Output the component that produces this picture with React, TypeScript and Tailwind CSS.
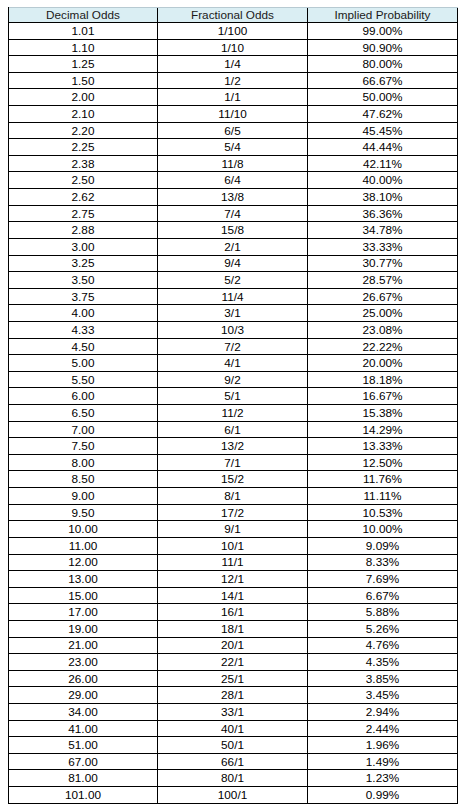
const rows: [string, string, string][] = [
  ["1.01", "1/100", "99.00%"],
  ["1.10", "1/10", "90.90%"],
  ["1.25", "1/4", "80.00%"],
  ["1.50", "1/2", "66.67%"],
  ["2.00", "1/1", "50.00%"],
  ["2.10", "11/10", "47.62%"],
  ["2.20", "6/5", "45.45%"],
  ["2.25", "5/4", "44.44%"],
  ["2.38", "11/8", "42.11%"],
  ["2.50", "6/4", "40.00%"],
  ["2.62", "13/8", "38.10%"],
  ["2.75", "7/4", "36.36%"],
  ["2.88", "15/8", "34.78%"],
  ["3.00", "2/1", "33.33%"],
  ["3.25", "9/4", "30.77%"],
  ["3.50", "5/2", "28.57%"],
  ["3.75", "11/4", "26.67%"],
  ["4.00", "3/1", "25.00%"],
  ["4.33", "10/3", "23.08%"],
  ["4.50", "7/2", "22.22%"],
  ["5.00", "4/1", "20.00%"],
  ["5.50", "9/2", "18.18%"],
  ["6.00", "5/1", "16.67%"],
  ["6.50", "11/2", "15.38%"],
  ["7.00", "6/1", "14.29%"],
  ["7.50", "13/2", "13.33%"],
  ["8.00", "7/1", "12.50%"],
  ["8.50", "15/2", "11.76%"],
  ["9.00", "8/1", "11.11%"],
  ["9.50", "17/2", "10.53%"],
  ["10.00", "9/1", "10.00%"],
  ["11.00", "10/1", "9.09%"],
  ["12.00", "11/1", "8.33%"],
  ["13.00", "12/1", "7.69%"],
  ["15.00", "14/1", "6.67%"],
  ["17.00", "16/1", "5.88%"],
  ["19.00", "18/1", "5.26%"],
  ["21.00", "20/1", "4.76%"],
  ["23.00", "22/1", "4.35%"],
  ["26.00", "25/1", "3.85%"],
  ["29.00", "28/1", "3.45%"],
  ["34.00", "33/1", "2.94%"],
  ["41.00", "40/1", "2.44%"],
  ["51.00", "50/1", "1.96%"],
  ["67.00", "66/1", "1.49%"],
  ["81.00", "80/1", "1.23%"],
  ["101.00", "100/1", "0.99%"],
];

const headers = ["Decimal Odds", "Fractional Odds", "Implied Probability"];

export default function App() {
  return (
    <div className="min-h-[808px] bg-white pl-2 pt-[7px] font-['Liberation_Sans',Arial,sans-serif] text-[11.75px] text-black">
      <div className="w-[450px] border-l border-black">
        <div className="grid h-[16px] grid-cols-[149px_150px_150px] border-t border-[#b7cad2] bg-[#daeef3]">
          {headers.map((h) => (
            <div
              key={h}
              className="flex items-center justify-center border-r border-b border-black leading-none text-[#1a1a1a]"
            >
              {h}
            </div>
          ))}
        </div>
        {rows.map((r) => (
          <div key={r[0]} className="grid h-[16.62px] grid-cols-[149px_150px_150px]">
            {r.map((c, i) => (
              <div
                key={i}
                className="flex items-center justify-center border-r border-b border-black leading-none"
              >
                {c}
              </div>
            ))}
          </div>
        ))}
      </div>
    </div>
  );
}
